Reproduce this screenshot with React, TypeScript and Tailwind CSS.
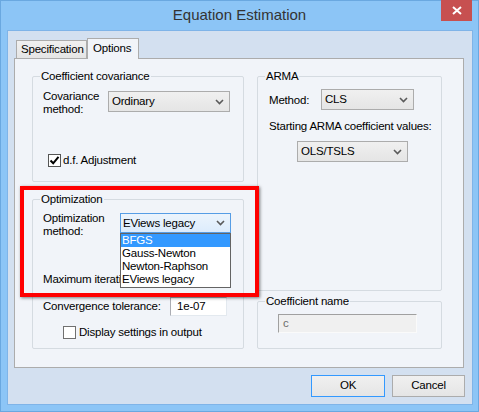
import React from "react";

const Chevron = () => (
  <svg width="9" height="6" viewBox="0 0 9 6">
    <path d="M1 1L4.5 4.5L8 1" fill="none" stroke="#5a5a5a" strokeWidth="1.6" />
  </svg>
);

function Select({ text, className, focused, children }: { text: string; className: string; focused?: boolean; children?: React.ReactNode }) {
  const base = focused
    ? "border-[#569de5] from-[#ecf4fc] to-[#dcecfc] pl-[2px]"
    : "border-[#acacac] from-[#f0f0f0] to-[#e5e5e5] pl-[3px]";
  return (
    <div className={`relative flex items-center justify-between border bg-linear-to-b pr-[5px] ${base} ${className}`}>
      <span className="leading-[13px]">{text}</span>
      <Chevron />
      {children}
    </div>
  );
}

function Group({ title, className, children }: { title: string; className: string; children?: React.ReactNode }) {
  return (
    <div className={`relative border border-[#d5dbe1] rounded-[2px] ${className}`}>
      <span className="absolute left-[7px] -top-[8px] px-[1px] bg-[#f1f4f9] leading-[15px]">{title}</span>
      {children}
    </div>
  );
}

function Checkbox({ checked, border }: { checked?: boolean; border: string }) {
  return (
    <div className={`w-[13px] h-[13px] border bg-white flex items-center justify-center ${border}`}>
      {checked && (
        <svg width="11" height="11" viewBox="0 0 11 11">
          <path d="M1.5 5.5L4.2 8.3L9.5 1.8" fill="none" stroke="#000" strokeWidth="2" />
        </svg>
      )}
    </div>
  );
}

export default function App() {
  return (
    <div className="relative w-[479px] h-[412px] bg-[#8cc5f6] shadow-[inset_0_0_0_1px_#6aa8e0] font-['Liberation_Sans',Arial,sans-serif] text-[11.5px] tracking-[-0.2px] text-black overflow-hidden">
      <div className="h-[30px] flex items-center justify-center text-[15px] tracking-normal text-[#333] pt-[1px]">Equation Estimation</div>
      <div className="absolute right-[7px] top-0 w-[31px] h-[21px] bg-[#c75050] flex items-center justify-center">
        <svg width="10" height="9" viewBox="0 0 10 9">
          <path d="M1 1L9 8M9 1L1 8" stroke="#fff" strokeWidth="2" />
        </svg>
      </div>

      <div className="ml-[7px] w-[466px] h-[375px] border border-[#7fb4e8] bg-[#d3e0f0] pl-[6px] pt-[7px]">
        <div className="flex items-end h-[20px] pl-[2px]">
          <div className="h-[18px] w-[71px] border border-b-0 border-[#acacac] bg-linear-to-b from-[#f0f0f0] to-[#e5e5e5] pl-[4px] flex items-center leading-[13px] whitespace-nowrap">
            Specification
          </div>
          <div className="relative z-10 h-[21px] w-[52px] -mb-[1px] border border-b-0 border-[#acacac] bg-[#f1f4f9] pl-[5px] pb-[2px] flex items-center leading-[13px]">
            Options
          </div>
        </div>

        <div className="w-[450px] h-[310px] border border-[#acacac] bg-[#f1f4f9] pl-[17px] pt-[17px] flex gap-[13px]">
          <div className="flex flex-col w-[212px] gap-[17px]">
            <Group title="Coefficient covariance" className="h-[106px]">
              <div className="flex items-start pt-[13px] pl-[10px]">
                <div className="w-[65px] leading-[13px]">
                  Covariance
                  <br />
                  method:
                </div>
                <Select text="Ordinary" className="mt-[1px] w-[122px] h-[21px]" />
              </div>
              <div className="flex items-center gap-[2px] ml-[15px] mt-[38px]">
                <Checkbox checked border="border-[#555]" />
                <span className="leading-[13px]">d.f. Adjustment</span>
              </div>
            </Group>

            <Group title="Optimization" className="h-[150px]">
              <div className="flex items-start pt-[12px] pl-[10px]">
                <div className="w-[77px] leading-[13px]">
                  Optimization
                  <br />
                  method:
                </div>
                <Select text="EViews legacy" focused className="z-20 mt-[1px] w-[111px] h-[20px]">
                  <div className="absolute left-[-1px] top-[19px] w-[111px] h-[55px] border border-[#646464] bg-white flex flex-col">
                    <div className="h-[13px] leading-[13px] bg-[#3399ff] text-white pl-[1px]">BFGS</div>
                    <div className="h-[13px] leading-[13px] pl-[1px]">Gauss-Newton</div>
                    <div className="h-[13px] leading-[13px] pl-[1px]">Newton-Raphson</div>
                    <div className="h-[13px] leading-[13px] pl-[1px]">EViews legacy</div>
                  </div>
                </Select>
              </div>
              <div className="flex items-start mt-[30px] pl-[10px]">
                <div className="w-[127px] mt-[5px] leading-[13px]">
                  <div className="w-[77px] overflow-hidden whitespace-nowrap">Maximum iterations:</div>
                </div>
                <div className="w-[57px] h-[19px] bg-white border border-[#abadb3] border-r-[#e3e9ef] border-b-[#e3e9ef]"></div>
              </div>
              <div className="flex items-center mt-[10px] pl-[10px]">
                <div className="w-[127px] leading-[13px]">Convergence tolerance:</div>
                <div className="w-[57px] h-[19px] bg-white border border-[#abadb3] border-r-[#e3e9ef] border-b-[#e3e9ef] pl-[6px] leading-[17px]">1e-07</div>
              </div>
              <div className="flex items-center gap-[3px] ml-[30px] mt-[10px]">
                <Checkbox border="border-[#707070]" />
                <span className="leading-[13px]">Display settings in output</span>
              </div>
            </Group>
          </div>

          <div className="flex flex-col w-[185px] gap-[10px]">
            <Group title="ARMA" className="h-[215px]">
              <div className="flex items-start pl-[11px]">
                <div className="w-[52px] mt-[17px] leading-[13px]">Method:</div>
                <Select text="CLS" className="mt-[12px] w-[93px] h-[21px]" />
              </div>
              <div className="mt-[10px] pl-[11px] leading-[13px] whitespace-nowrap">Starting ARMA coefficient values:</div>
              <Select text="OLS/TSLS" className="mt-[8px] ml-[39px] w-[111px] h-[21px]" />
            </Group>
            <Group title="Coefficient name" className="h-[48px]">
              <div className="mt-[12px] ml-[20px] w-[139px] h-[19px] bg-[#f0f0f0] border border-[#a0a0a0] border-r-[#fafafa] border-b-[#fafafa] pl-[4px] leading-[17px] text-[#6d6d6d]">
                c
              </div>
            </Group>
          </div>
        </div>

        <div className="flex justify-end gap-[7px] pr-[7px] mt-[7px]">
          <div className="w-[74px] h-[22px] border border-[#3399ff] bg-linear-to-b from-[#f0f0f0] to-[#e5e5e5] flex items-center justify-center">OK</div>
          <div className="w-[73px] h-[22px] border border-[#acacac] bg-linear-to-b from-[#f0f0f0] to-[#e5e5e5] flex items-center justify-center">Cancel</div>
        </div>
      </div>

      <div className="absolute left-[20px] top-[186px] w-[239px] h-[111px] border-[4px] border-[#ff0000] shadow-[1px_1px_3px_rgba(0,0,0,0.5)] z-30 pointer-events-none" />
    </div>
  );
}
